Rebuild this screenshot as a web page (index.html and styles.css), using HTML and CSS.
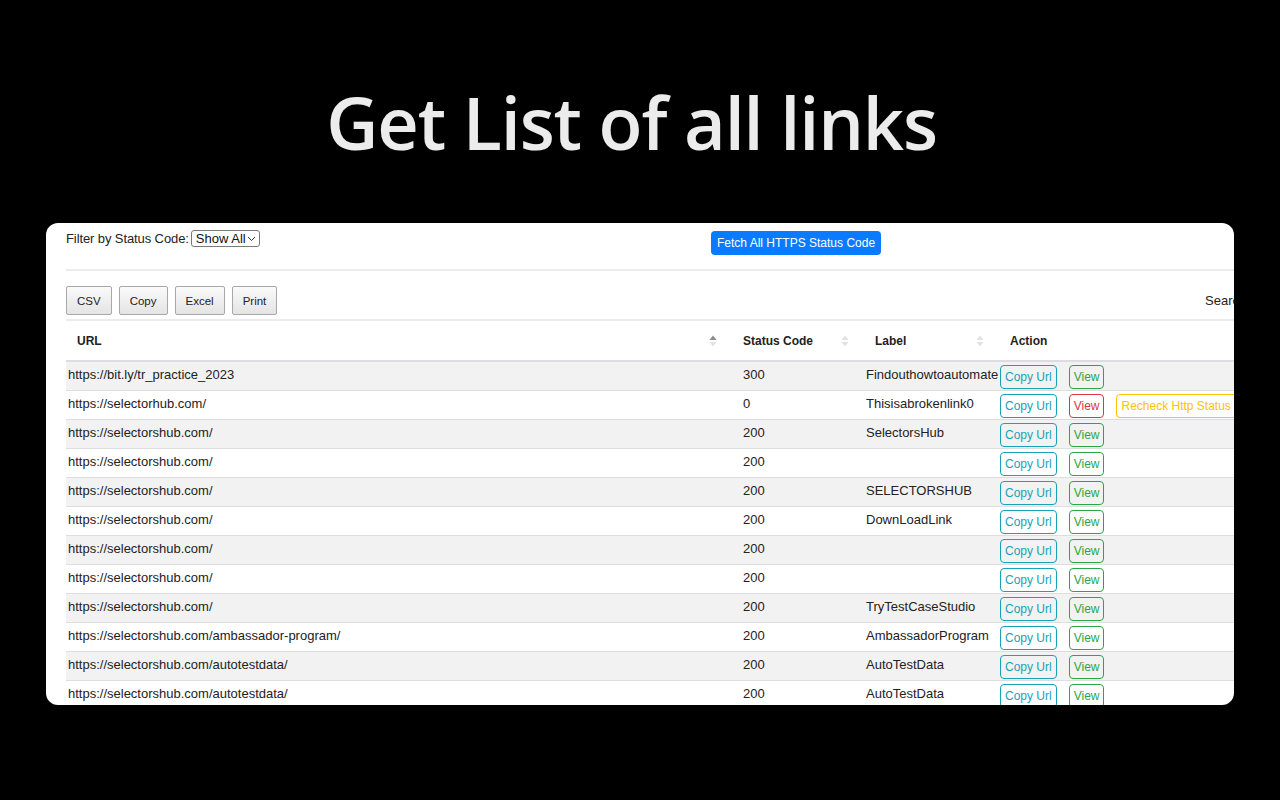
FILE: index.html
```html
<!DOCTYPE html>
<html lang="en">
<head>
<meta charset="utf-8">
<title>Get List of all links</title>
<link rel="stylesheet" href="styles.css">
</head>
<body>
<header class="hero">
  <h1 class="title">Get List of all links</h1>
</header>
<main class="card">
  <div class="inner">
    <div class="toolbar">
      <div class="filter">
        <span class="filter-label">Filter by Status Code:</span>
        <span class="select">Show All
          <svg class="chev" width="9" height="6" viewBox="0 0 9 6"><path d="M1 1 L4.5 4.5 L8 1" fill="none" stroke="#333" stroke-width="1"/></svg>
        </span>
      </div>
      <button class="fetch">Fetch All HTTPS Status Code</button>
    </div>

    <div class="btnrow">
      <div class="dt-buttons">
        <button class="dt-btn">CSV</button>
        <button class="dt-btn">Copy</button>
        <button class="dt-btn">Excel</button>
        <button class="dt-btn">Print</button>
      </div>
      <div class="search">Search:</div>
    </div>

    <table class="head">
      <colgroup>
        <col class="hc-url"><col class="hc-status"><col class="hc-label"><col class="hc-action">
      </colgroup>
      <thead>
        <tr>
          <th><div class="thc"><span>URL</span>
            <svg class="sort" width="8" height="12" viewBox="0 0 8 12"><path d="M4 0.5 L7.5 5 L0.5 5 Z" fill="#8a8a8a"/><path d="M4 11.5 L7.5 7 L0.5 7 Z" fill="#e2e2e2"/></svg></div></th>
          <th><div class="thc"><span>Status Code</span>
            <svg class="sort" width="8" height="12" viewBox="0 0 8 12"><path d="M4 0.5 L7.5 5 L0.5 5 Z" fill="#e2e2e2"/><path d="M4 11.5 L7.5 7 L0.5 7 Z" fill="#e2e2e2"/></svg></div></th>
          <th><div class="thc"><span>Label</span>
            <svg class="sort" width="8" height="12" viewBox="0 0 8 12"><path d="M4 0.5 L7.5 5 L0.5 5 Z" fill="#e2e2e2"/><path d="M4 11.5 L7.5 7 L0.5 7 Z" fill="#e2e2e2"/></svg></div></th>
          <th><div class="thc"><span>Action</span></div></th>
        </tr>
      </thead>
    </table>

    <table class="body">
      <colgroup>
        <col class="bc-url"><col class="bc-status"><col class="bc-label"><col class="bc-action">
      </colgroup>
      <tbody>
        <tr class="odd"><td>https://bit.ly/tr_practice_2023</td><td>300</td><td>Findouthowtoautomate</td>
          <td><div class="acts"><button class="ob info">Copy Url</button><button class="ob ok">View</button></div></td></tr>
        <tr><td>https://selectorhub.com/</td><td>0</td><td>Thisisabrokenlink0</td>
          <td><div class="acts"><button class="ob info">Copy Url</button><button class="ob bad">View</button><button class="ob warn">Recheck Http Status Code</button></div></td></tr>
        <tr class="odd"><td>https://selectorshub.com/</td><td>200</td><td>SelectorsHub</td>
          <td><div class="acts"><button class="ob info">Copy Url</button><button class="ob ok">View</button></div></td></tr>
        <tr><td>https://selectorshub.com/</td><td>200</td><td></td>
          <td><div class="acts"><button class="ob info">Copy Url</button><button class="ob ok">View</button></div></td></tr>
        <tr class="odd"><td>https://selectorshub.com/</td><td>200</td><td>SELECTORSHUB</td>
          <td><div class="acts"><button class="ob info">Copy Url</button><button class="ob ok">View</button></div></td></tr>
        <tr><td>https://selectorshub.com/</td><td>200</td><td>DownLoadLink</td>
          <td><div class="acts"><button class="ob info">Copy Url</button><button class="ob ok">View</button></div></td></tr>
        <tr class="odd"><td>https://selectorshub.com/</td><td>200</td><td></td>
          <td><div class="acts"><button class="ob info">Copy Url</button><button class="ob ok">View</button></div></td></tr>
        <tr><td>https://selectorshub.com/</td><td>200</td><td></td>
          <td><div class="acts"><button class="ob info">Copy Url</button><button class="ob ok">View</button></div></td></tr>
        <tr class="odd"><td>https://selectorshub.com/</td><td>200</td><td>TryTestCaseStudio</td>
          <td><div class="acts"><button class="ob info">Copy Url</button><button class="ob ok">View</button></div></td></tr>
        <tr><td>https://selectorshub.com/ambassador-program/</td><td>200</td><td>AmbassadorProgram</td>
          <td><div class="acts"><button class="ob info">Copy Url</button><button class="ob ok">View</button></div></td></tr>
        <tr class="odd"><td>https://selectorshub.com/autotestdata/</td><td>200</td><td>AutoTestData</td>
          <td><div class="acts"><button class="ob info">Copy Url</button><button class="ob ok">View</button></div></td></tr>
        <tr><td>https://selectorshub.com/autotestdata/</td><td>200</td><td>AutoTestData</td>
          <td><div class="acts"><button class="ob info">Copy Url</button><button class="ob ok">View</button></div></td></tr>
      </tbody>
    </table>
  </div>
</main>
</body>
</html>
```

FILE: styles.css
```css
html, body {
  margin: 0;
  padding: 0;
  background: #000;
}
body {
  font-family: "Liberation Sans", Arial, sans-serif;
  color: #222;
  height: 800px;
  overflow: hidden;
}

.hero {
  height: 223px;
  box-sizing: border-box;
  padding-top: 86px;
}
.title {
  margin: 0;
  padding-right: 17px;
  text-align: center;
  font-family: "Open Sans", "Noto Sans", sans-serif;
  font-weight: 600;
  font-size: 72px;
  line-height: 72px;
  color: #ececec;
  letter-spacing: -1.1px;
}

.card {
  display: block;
  margin: 0 46px;
  height: 482px;
  background: #fff;
  border-radius: 12px;
  overflow: hidden;
  padding-left: 20px;
  box-sizing: border-box;
}
.inner {
  width: 1460px;
}

/* toolbar */
.toolbar {
  display: flex;
  align-items: flex-start;
  padding-top: 7px;
  height: 39px;
  box-sizing: content-box;
  border-bottom: 2px solid #ececec;
}
.filter {
  flex: 0 0 645px;
  display: flex;
  align-items: center;
  font-size: 13px;
  height: 17px;
}
.filter-label {
  margin-right: 2px;
  letter-spacing: -0.1px;
}
.select {
  display: inline-flex;
  align-items: center;
  height: 17px;
  box-sizing: border-box;
  border: 1px solid #7a7a7a;
  border-radius: 3px;
  padding: 0 3px 0 4px;
  font-size: 13px;
  color: #111;
  width: 69px;
  justify-content: space-between;
}
.chev {
  display: block;
}
.fetch {
  margin-top: 1px;
  height: 24px;
  background: #0a7bff;
  color: #fff;
  border: 0;
  border-radius: 4px;
  font-family: "Liberation Sans", Arial, sans-serif;
  font-size: 12px;
  padding: 0 6px;
}

/* buttons row */
.btnrow {
  display: flex;
  align-items: center;
  margin-top: 15px;
  height: 29px;
  margin-bottom: 4px;
}
.dt-buttons {
  flex: 0 0 1139px;
  display: flex;
  gap: 7px;
}
.dt-btn {
  height: 29px;
  padding: 0 10px;
  font-family: "Liberation Sans", Arial, sans-serif;
  font-size: 11.5px;
  color: #222;
  border: 1px solid #a8a8a8;
  border-radius: 2px;
  background: linear-gradient(to bottom, #fafafa 0%, #e4e4e4 100%);
}
.search {
  font-size: 13px;
  color: #222;
}

/* header table */
table {
  border-collapse: collapse;
  table-layout: fixed;
}
.head {
  width: 1400px;
  border-top: 2px solid #ececec;
}
.hc-url { width: 666px; }
.hc-status { width: 132px; }
.hc-label { width: 135px; }
.hc-action { width: 467px; }
.head th {
  height: 39px;
  padding: 0 19px 0 11px;
  text-align: left;
  font-size: 12px;
  font-weight: bold;
  color: #222;
  border-bottom: 2px solid #dcdde2;
}
.thc {
  display: flex;
  align-items: center;
  justify-content: space-between;
}
.sort {
  display: block;
  margin-right: -4px;
}

/* body table */
.body {
  width: 1400px;
}
.bc-url { width: 675px; }
.bc-status { width: 123px; }
.bc-label { width: 134px; }
.bc-action { width: 468px; }
.body td {
  padding: 3px 2px 1px;
  vertical-align: top;
  font-size: 13px;
  line-height: 20px;
  color: #222;
  border-bottom: 1px solid #dedede;
  white-space: nowrap;
}
.body tr.odd td {
  background: #f2f2f2;
}
.acts {
  display: flex;
  gap: 12px;
}
.ob {
  height: 24px;
  padding: 0 4px;
  background: transparent;
  border: 1px solid;
  border-radius: 4px;
  font-family: "Liberation Sans", Arial, sans-serif;
  font-size: 12px;
  white-space: nowrap;
}
.ob.info { color: #17a2b8; border-color: #17a2b8; }
.ob.ok { color: #28a745; border-color: #28a745; }
.ob.bad { color: #dc3545; border-color: #dc3545; }
.ob.warn { color: #ffc107; border-color: #ffc107; }
```
